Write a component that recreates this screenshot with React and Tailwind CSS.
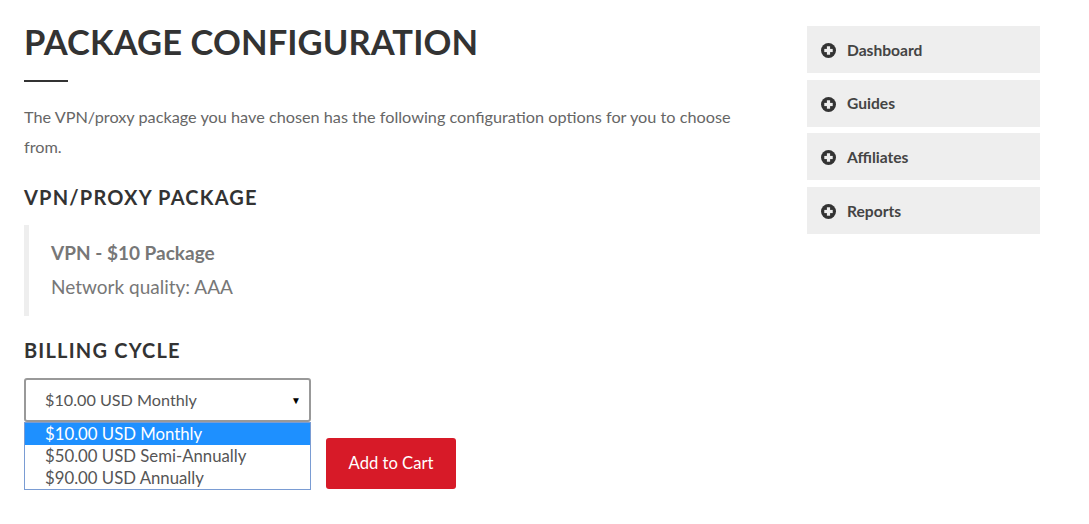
import React from 'react';

const sideLinks = ['Dashboard', 'Guides', 'Affiliates', 'Reports'];

const cycles = [
  '$10.00 USD Monthly',
  '$50.00 USD Semi-Annually',
  '$90.00 USD Annually',
];

const PlusCircle = () => (
  <svg viewBox="0 0 16 16" className="w-[15px] h-[15px] shrink-0">
    <circle cx="8" cy="8" r="8" fill="#333" />
    <rect x="3.5" y="6.3" width="9" height="3.4" fill="#eee" />
    <rect x="6.3" y="3.5" width="3.4" height="9" fill="#eee" />
  </svg>
);

const App = () => {
  return (
    <div className="min-h-[524px] bg-white font-['Lato',sans-serif] text-[#666]">
      <div className="flex pl-6 pr-[49px] pt-[26px]">
        <main className="w-[735px]">
          <h1 className="text-[34.5px] leading-[36px] font-bold tracking-[0.1px] text-[#333] -mt-[2px]">
            PACKAGE CONFIGURATION
          </h1>
          <div className="w-11 h-[2px] bg-[#333] mt-[20px]" />
          <p className="mt-[20px] text-[16.25px] leading-[30px] text-[#666]">
            The VPN/proxy package you have chosen has the following configuration options for you to choose from.
          </p>
          <h3 className="mt-[23px] text-[20px] leading-[24px] font-bold tracking-[1.2px] text-[#333]">
            VPN/PROXY PACKAGE
          </h3>
          <div className="mt-[16px] border-l-[5px] border-[#eee] pl-[22px] pt-[13px] pb-[14px]">
            <div className="text-[19px] leading-[30px] font-bold text-[#777]">VPN - $10 Package</div>
            <div className="mt-[4px] text-[19px] leading-[30px] text-[#777]">Network quality: AAA</div>
          </div>
          <h3 className="mt-[22px] text-[20px] leading-[24px] font-bold tracking-[1.2px] text-[#333]">
            BILLING CYCLE
          </h3>
          <div className="mt-[16px] flex items-start gap-[15px]">
            <div className="w-[287px]">
              <div className="h-[44px] flex items-center justify-between border-2 border-[#999] rounded-[3px] pl-[19px] pr-[8px] text-[16.2px] text-[#555]">
                <span>$10.00 USD Monthly</span>
                <span className="text-[10px] text-black">▼</span>
              </div>
              <div className="border border-[#7a9cd3] w-[287px]">
                {cycles.map((c, i) => (
                  <div
                    key={c}
                    className={`h-[22px] leading-[22px] pl-[20px] text-[16.75px] ${i === 0 ? 'bg-[#1e90ff] text-white' : 'text-[#555]'}`}
                  >
                    {c}
                  </div>
                ))}
              </div>
            </div>
            <button className="mt-[60px] w-[130px] h-[51px] rounded-[3px] bg-[#d71a28] text-white text-[16.6px]">
              Add to Cart
            </button>
          </div>
        </main>
        <aside className="ml-auto w-[233px] flex flex-col gap-[6.67px]">
          {sideLinks.map((l) => (
            <div key={l} className="h-[47px] bg-[#eee] flex items-center gap-[11px] pl-[14px] pt-[2px] text-[15.6px] font-bold text-[#444]">
              <PlusCircle />
              <span>{l}</span>
            </div>
          ))}
        </aside>
      </div>
    </div>
  );
};

export default App;
